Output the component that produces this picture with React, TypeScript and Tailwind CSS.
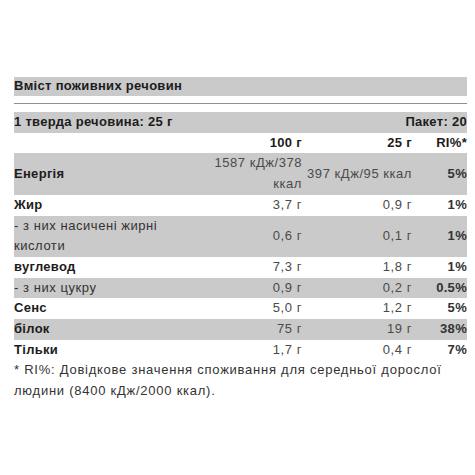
import React from "react";

type Row = { label: string; v100: string; v25: string; ri: string; grey: boolean; bold: boolean };

const rows: Row[] = [
  { label: "Енергія", v100: "1587 кДж/378 ккал", v25: "397 кДж/95 ккал", ri: "5%", grey: true, bold: true },
  { label: "Жир", v100: "3,7 г", v25: "0,9 г", ri: "1%", grey: false, bold: true },
  { label: "- з них насичені жирні кислоти", v100: "0,6 г", v25: "0,1 г", ri: "1%", grey: true, bold: false },
  { label: "вуглевод", v100: "7,3 г", v25: "1,8 г", ri: "1%", grey: false, bold: true },
  { label: "- з них цукру", v100: "0,9 г", v25: "0,2 г", ri: "0.5%", grey: true, bold: false },
  { label: "Сенс", v100: "5,0 г", v25: "1,2 г", ri: "5%", grey: false, bold: true },
  { label: "білок", v100: "75 г", v25: "19 г", ri: "38%", grey: true, bold: true },
  { label: "Тільки", v100: "1,7 г", v25: "0,4 г", ri: "7%", grey: false, bold: true },
];

export default function App() {
  return (
    <div
      className="w-[475px] h-[475px] bg-white text-[13px] leading-[20.7px] text-[#1c1c1c]"
      style={{ fontFamily: '"Liberation Sans", Arial, sans-serif' }}
    >
      <div className="pt-[77px] pl-[14px] w-[467px]">
        <div className="bg-[#cacaca] h-[19px] flex items-center font-bold tracking-[0.3px]">Вміст поживних речовин</div>
        <div className="mt-[7px] h-px bg-[#8f8f8f]" />
        <div className="mt-[8px] bg-[#cacaca] flex justify-between font-bold tracking-[0.3px]">
          <span>1 тверда речовина: 25 г</span>
          <span>Пакет: 20</span>
        </div>
        <div className="grid grid-cols-[197px_91px_110px_55px] font-bold tracking-[0.3px]">
          <span />
          <span className="text-right">100 г</span>
          <span className="text-right">25 г</span>
          <span className="text-right">RI%*</span>
        </div>
        {rows.map((r) => (
          <div
            key={r.label}
            className={`grid grid-cols-[197px_91px_110px_55px] items-center ${r.grey ? "bg-[#cacaca]" : "bg-white"}`}
          >
            <span className={`pr-[8px] ${r.bold ? "font-bold tracking-[0.3px]" : "text-[#333] tracking-[0.55px]"}`}>{r.label}</span>
            <span className="text-right text-[#4a4a4a] tracking-[0.55px]">{r.v100}</span>
            <span className="text-right text-[#4a4a4a] tracking-[0.55px]">{r.v25}</span>
            <span className="text-right font-bold text-[#333] tracking-[0.3px]">{r.ri}</span>
          </div>
        ))}
        <div className="text-[#333] tracking-[0.75px] w-[440px]">
          * RI%: Довідкове значення споживання для середньої дорослої людини (8400 кДж/2000 ккал).
        </div>
      </div>
    </div>
  );
}
